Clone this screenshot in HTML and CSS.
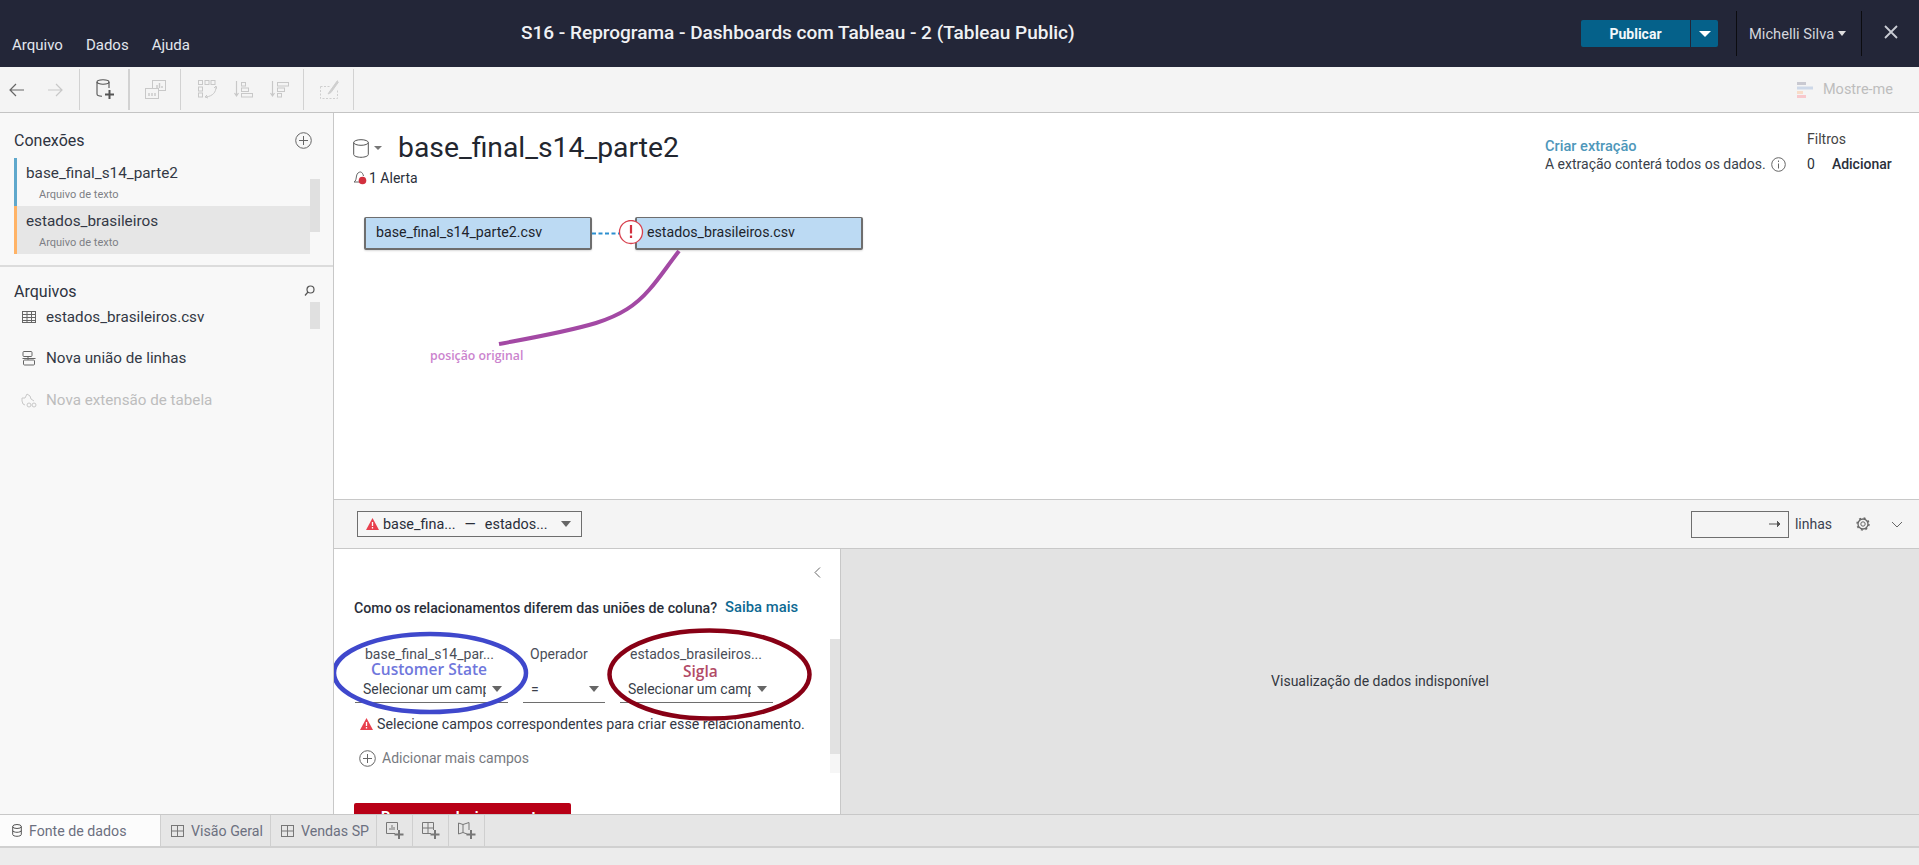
FILE: index.html
```html
<!DOCTYPE html>
<html lang="pt-BR">
<head>
<meta charset="utf-8">
<title>S16 - Reprograma - Dashboards com Tableau - 2 (Tableau Public)</title>
<link rel="stylesheet" href="styles.css">
</head>
<body>
<div class="app">
  <header class="topbar">
    <nav class="menu"><span>Arquivo</span><span>Dados</span><span>Ajuda</span></nav>
    <div class="doc-title">S16 - Reprograma - Dashboards com Tableau - 2 (Tableau Public)</div>
    <div class="publish"><span class="publish-main">Publicar</span><span class="publish-drop"><i class="caret caret-white"></i></span></div>
    <div class="user"><span>Michelli Silva</span><i class="caret caret-small"></i></div>
    <svg class="close" width="14" height="14" viewBox="0 0 14 14"><path d="M1 1l12 12M13 1L1 13" stroke="#c9ccd4" stroke-width="1.8" fill="none"/></svg>
  </header>

  <div class="toolbar">
    <div class="tool-group tg-nav">
      <svg width="16" height="14" viewBox="0 0 16 14"><path d="M15 7H1.5M7 1L1 7l6 6" stroke="#666" stroke-width="1.2" fill="none"/></svg>
      <svg width="16" height="14" viewBox="0 0 16 14"><path d="M1 7h13.5M9 1l6 6-6 6" stroke="#c8c8c8" stroke-width="1.2" fill="none"/></svg>
    </div>
    <div class="tool-group tg-data">
      <svg width="18" height="21" viewBox="0 0 18 21"><ellipse cx="7" cy="3" rx="6" ry="2.2" fill="none" stroke="#555" stroke-width="1.1"/><path d="M1 3v12c0 1.400 2 2.200 5 2.200M13 3v6" fill="none" stroke="#555" stroke-width="1.1"/><path d="M13.500 11v9M9 15.500h9" stroke="#555" stroke-width="2"/></svg>
    </div>
    <div class="tool-group tg-show">
      <svg width="21" height="20" viewBox="0 0 21 20" fill="none" stroke="#c8c8c8"><rect x="7.500" y=".5" width="13" height="10"/><rect x=".5" y="8.500" width="13" height="10" fill="#f4f4f4"/><path d="M12 8V5M14.500 8V3M17 8V6M4 16v-3M7 16v-3M10 16v-3" stroke-width="1.400"/></svg>
    </div>
    <div class="tool-group tg-sort">
      <svg width="19" height="19" viewBox="0 0 19 19" fill="none" stroke="#c8c8c8"><rect x=".5" y=".5" width="4" height="4"/><rect x="7" y=".5" width="4" height="4"/><rect x="13" y=".5" width="4" height="4"/><rect x=".5" y="7" width="4" height="4"/><rect x=".5" y="13" width="4" height="4"/><path d="M18 7c0 5-3 9-10 10M16 8l2-2 1 3M9 15l-2 2 3 1"/></svg>
      <svg width="19" height="17" viewBox="0 0 19 17" fill="none" stroke="#c8c8c8"><path d="M2.500 0v14M.5 12l2 3 2-3" stroke-width="1.200"/><rect x="7.500" y="1.500" width="4" height="3.500"/><rect x="7.500" y="7" width="7" height="3.500"/><rect x="7.500" y="12.500" width="11" height="3.500"/></svg>
      <svg width="19" height="17" viewBox="0 0 19 17" fill="none" stroke="#c8c8c8"><path d="M2.500 0v14M.5 12l2 3 2-3" stroke-width="1.200"/><rect x="7.500" y="1.500" width="11" height="3.500"/><rect x="7.500" y="7" width="7" height="3.500"/><rect x="7.500" y="12.500" width="4" height="3.500"/></svg>
    </div>
    <div class="tool-group tg-edit">
      <svg width="19" height="19" viewBox="0 0 19 19" fill="none" stroke="#cfcfcf"><path d="M.5 6.500h9M.5 6.500v12h17V9" stroke-dasharray="2 1.500"/><path d="M17.500 .5L10 11l-2 3 3-1.500L18.500 2" fill="#cfcfcf"/></svg>
    </div>
    <div class="show-me">
      <svg width="16" height="16" viewBox="0 0 16 16"><rect y="0" width="9" height="3" fill="#c9c9d1"/><rect y="4.500" width="16" height="3" fill="#cdd8e8"/><rect y="9" width="6" height="3" fill="#f8dcc8"/><rect y="13" width="9" height="3" fill="#f8c8cc"/></svg>
      <span>Mostre-me</span>
    </div>
  </div>

  <div class="workspace">
    <aside class="sidebar">
      <section class="connections">
        <div class="side-head">
          <h2>Conexões</h2>
          <svg width="17" height="17" viewBox="0 0 17 17" fill="none" stroke="#666"><circle cx="8.500" cy="8.500" r="7.800"/><path d="M8.500 4v9M4 8.500h9"/></svg>
        </div>
        <div class="conn-list">
          <div class="conn conn-blue"><div class="conn-name">base_final_s14_parte2</div><div class="conn-type">Arquivo de texto</div></div>
          <div class="conn conn-orange"><div class="conn-name">estados_brasileiros</div><div class="conn-type">Arquivo de texto</div></div>
          <div class="scroll-thumb conn-thumb"></div>
        </div>
      </section>
      <section class="files">
        <div class="side-head files-head">
          <h2>Arquivos</h2>
          <svg width="11" height="11" viewBox="0 0 11 11" fill="none" stroke="#555" stroke-width="1.200"><circle cx="6.500" cy="4.500" r="3.500"/><path d="M4 7L1 10.500"/></svg>
        </div>
        <div class="scroll-thumb file-thumb"></div>
        <div class="file-item">
          <svg width="14" height="12" viewBox="0 0 14 12" fill="none" stroke="#666"><rect x=".5" y=".5" width="13" height="11"/><path d="M.5 3.500h13M.5 6.500h13M.5 9.500h13M5 .5v11M9.500 .5v11"/></svg>
          <span>estados_brasileiros.csv</span>
        </div>
        <div class="file-item">
          <svg width="14" height="15" viewBox="0 0 14 15" fill="none" stroke="#666"><rect x="1" y=".5" width="9" height="5" rx="1"/><rect x="1.500" y="9" width="11" height="5" rx="1"/><path d="M.5 7.500h13M6 5.500V9"/></svg>
          <span>Nova união de linhas</span>
        </div>
        <div class="file-item file-disabled">
          <svg width="16" height="16" viewBox="0 0 16 16" fill="none" stroke="#c8c8c8"><path d="M1 9V6h3L6 2l3 2 1 3 3 2M1 9l1 3 2 1"/><circle cx="8" cy="13" r="2"/><circle cx="13" cy="13" r="2"/></svg>
          <span>Nova extensão de tabela</span>
        </div>
      </section>
    </aside>

    <main class="content">
      <section class="canvas">
        <div class="canvas-head">
          <div class="ds-block">
            <div class="ds-title">
              <svg width="16" height="19" viewBox="0 0 16 19" fill="none" stroke="#555"><ellipse cx="8" cy="3.500" rx="7.300" ry="2.800"/><path d="M.7 3.500v12c0 1.500 3.300 2.800 7.300 2.800s7.300-1.300 7.300-2.800v-12"/></svg>
              <i class="caret caret-tiny"></i>
              <h1>base_final_s14_parte2</h1>
            </div>
            <div class="alert">
              <svg width="15" height="14" viewBox="0 0 15 14"><path d="M1 11c2-1 2-3 2.500-6S6 1 7.500 1 10 3 10.500 5" fill="none" stroke="#666"/><path d="M1 11h6" stroke="#666"/><circle cx="9.500" cy="9.500" r="3.800" fill="#d2303e"/></svg>
              <span>1 Alerta</span>
            </div>
          </div>
          <div class="extract">
            <div class="extract-link">Criar extração</div>
            <div class="extract-note">A extração conterá todos os dados.
              <svg width="15" height="15" viewBox="0 0 15 15" fill="none" stroke="#666"><circle cx="7.500" cy="7.500" r="6.800"/><path d="M7.500 6.500V11.500M7.500 3.500v1.500"/></svg>
            </div>
          </div>
          <div class="filters">
            <div class="filters-label">Filtros</div>
            <div class="filters-row"><span>0</span><strong>Adicionar</strong></div>
          </div>
        </div>
        <div class="node node-a">base_final_s14_parte2.csv</div>
        <div class="node node-b">estados_brasileiros.csv</div>
        <svg class="link" width="52" height="26" viewBox="0 0 52 26">
          <path d="M0 13.500h29" stroke="#2c8fd0" stroke-width="2" stroke-dasharray="4 2.500"/>
          <circle cx="39" cy="12" r="11.500" fill="#fff" stroke="#d8404e" stroke-width="1.300"/>
          <path d="M39 5v8.500M39 15.500v2.500" stroke="#d2303e" stroke-width="2.200"/>
        </svg>
        <svg class="pointer" width="190" height="100" viewBox="0 0 190 100">
          <path d="M183 3C172 17 163 31 153 42C140 57 125 67 100 75C70 84 35 90 3 96" fill="none" stroke="#a349a4" stroke-width="4"/>
        </svg>
        <div class="pointer-label">posição original</div>
      </section>

      <div class="rel-bar">
        <div class="rel-select">
          <svg width="13" height="12" viewBox="0 0 13 12"><path d="M6.500 0L13 12H0z" fill="#e8404e"/><path d="M6.500 4v4M6.500 9v1.500" stroke="#fff" stroke-width="1.300"/></svg>
          <span>base_fina...</span><span class="dash">—</span><span>estados...</span>
          <i class="caret caret-grey"></i>
        </div>
        <div class="rows-box"><svg width="12" height="8" viewBox="0 0 12 8"><path d="M0 4h11M8 1l3 3-3 3" stroke="#555" fill="#555"/></svg></div>
        <span class="rows-label">linhas</span>
        <svg class="gear" width="14" height="14" viewBox="0 0 14 14" fill="none" stroke="#666"><circle cx="7" cy="7" r="2.200"/><circle cx="7" cy="7" r="5" stroke-width="1.300"/><circle cx="7" cy="7" r="6" stroke-width="1.400" stroke-dasharray="2 2.700"/></svg>
        <svg class="chev" width="12" height="7" viewBox="0 0 12 7" fill="none" stroke="#666"><path d="M1 1l5 5 5-5"/></svg>
      </div>

      <div class="lower">
        <section class="rel-panel">
          <svg class="collapse" width="7" height="11" viewBox="0 0 7 11" fill="none" stroke="#666"><path d="M6 .5L1 5.500l5 5"/></svg>
          <p class="rel-help"><span>Como os relacionamentos diferem das uniões de coluna?</span><a>Saiba mais</a></p>
          <div class="rel-fields">
            <div class="field field-wide">
              <div class="field-label">base_final_s14_par...</div>
              <div class="field-select"><span>Selecionar um campo</span><i class="caret caret-grey"></i></div>
            </div>
            <div class="field field-op">
              <div class="field-label">Operador</div>
              <div class="field-select"><span>=</span><i class="caret caret-grey"></i></div>
            </div>
            <div class="field field-wide">
              <div class="field-label">estados_brasileiros...</div>
              <div class="field-select"><span>Selecionar um campo</span><i class="caret caret-grey"></i></div>
            </div>
          </div>
          <div class="rel-warning">
            <svg width="13" height="12" viewBox="0 0 13 12"><path d="M6.500 0L13 12H0z" fill="#e8404e"/><path d="M6.500 4v4M6.500 9v1.500" stroke="#fff" stroke-width="1.300"/></svg>
            <span>Selecione campos correspondentes para criar esse relacionamento.</span>
          </div>
          <div class="rel-add">
            <svg width="17" height="17" viewBox="0 0 17 17" fill="none" stroke="#666"><circle cx="8.500" cy="8.500" r="7.800"/><path d="M8.500 4v9M4 8.500h9"/></svg>
            <span>Adicionar mais campos</span>
          </div>
          <div class="rel-remove">Remover relacionamento</div>
          <div class="panel-scroll"><div class="panel-thumb"></div></div>
          <svg class="ring ring-blue" width="200" height="87" viewBox="0 0 200 87"><ellipse cx="100" cy="42" rx="96" ry="39" fill="none" stroke="#3f48cc" stroke-width="4.500"/></svg>
          <svg class="ring ring-red" width="207" height="95" viewBox="0 0 207 95"><ellipse cx="103.500" cy="47.500" rx="100" ry="44" fill="none" stroke="#880015" stroke-width="4.500"/></svg>
          <div class="note note-blue">Customer State</div>
          <div class="note note-red">Sigla</div>
        </section>
        <section class="preview">Visualização de dados indisponível</section>
      </div>
    </main>
  </div>

  <footer class="tabs">
    <div class="tab tab-active">
      <svg width="10" height="13" viewBox="0 0 10 13" fill="none" stroke="#555"><ellipse cx="5" cy="2.500" rx="4.300" ry="2"/><path d="M.7 2.500v8c0 1 2 1.800 4.300 1.800s4.300-.8 4.300-1.800v-8M.7 6.500c0 1 2 1.800 4.300 1.800s4.300-.8 4.300-1.800"/></svg>
      <span>Fonte de dados</span>
    </div>
    <div class="tab tab-sheet">
      <svg width="13" height="12" viewBox="0 0 13 12" fill="none" stroke="#777"><rect x=".5" y=".5" width="12" height="11"/><path d="M.5 6h12M6.500 .5v11"/></svg>
      <span>Visão Geral</span>
    </div>
    <div class="tab tab-sheet tab-sp">
      <svg width="13" height="12" viewBox="0 0 13 12" fill="none" stroke="#777"><rect x=".5" y=".5" width="12" height="11"/><path d="M.5 6h12M6.500 .5v11"/></svg>
      <span>Vendas SP</span>
    </div>
    <div class="tab tab-new">
      <svg width="18" height="17" viewBox="0 0 18 17" fill="none" stroke="#777"><path d="M9 11.500H.5v-11h11V8"/><path d="M4 8V6M6 8V3M8 8V5"/><path d="M13 8v9M8.500 12.500h9" stroke-width="2"/></svg>
    </div>
    <div class="tab tab-new">
      <svg width="18" height="17" viewBox="0 0 18 17" fill="none" stroke="#777"><path d="M9 11.500H.5v-11h11V8M.5 6h11M6 .5v11"/><path d="M13 8v9M8.500 12.500h9" stroke-width="2"/></svg>
    </div>
    <div class="tab tab-new">
      <svg width="18" height="17" viewBox="0 0 18 17" fill="none" stroke="#777"><path d="M9 12l-4-1.500L.5 12V1L5 2.500 11 .5V8M5 2.500v8"/><path d="M13 8v9M8.500 12.500h9" stroke-width="2"/></svg>
    </div>
  </footer>
  <div class="statusbar"></div>
</div>
</body>
</html>
```

FILE: styles.css
```css
* { box-sizing: border-box; }
html, body { margin: 0; height: 100%; overflow: hidden; }
body { font-family: Roboto, "Liberation Sans", sans-serif; font-size: 14px; color: #2a2f3a; }
.app { display: flex; flex-direction: column; height: 865px; width: 1919px; background: #fff; }

.caret { display: inline-block; width: 0; height: 0; border-left: 5px solid transparent; border-right: 5px solid transparent; border-top: 6px solid #666; flex: none; }
.caret-white { border-top-color: #fff; border-left-width: 6px; border-right-width: 6px; }
.caret-small { border-top-color: #ddd; border-left-width: 4px; border-right-width: 4px; border-top-width: 5px; }
.caret-tiny { border-left-width: 4px; border-right-width: 4px; border-top-width: 4px; border-top-color: #777; }
.caret-grey { border-top-color: #666; }

/* top bar */
.topbar { height: 67px; flex: none; background: #232638; color: #e4e6ea; display: flex; align-items: center; position: relative; }
.menu { width: 521px; height: 100%; display: flex; gap: 23px; padding: 35px 0 0 12px; font-size: 15px; line-height: 20px; color: #e2e6ee; flex: none; }
.doc-title { width: 1060px; font-size: 19px; font-weight: 500; color: #f0f1f4; flex: none; padding-bottom: 2px; }
.publish { width: 137px; height: 27px; display: flex; border-radius: 2px; overflow: hidden; flex: none; }
.publish-main { width: 109px; background: #05618a; color: #f3f8fb; font-weight: 700; font-size: 14px; display: flex; align-items: center; justify-content: center; }
.publish-drop { flex: 1; margin-left: 1px; background: #05618a; display: flex; align-items: center; justify-content: center; }
.user { margin-left: 18px; width: 126px; height: 45px; border-left: 1px solid #0c0c10; border-right: 1px solid #0c0c10; display: flex; align-items: center; gap: 4px; padding-left: 12px; font-size: 14.700px; color: #d5d7de; flex: none; }
.close { margin-left: 22px; margin-bottom: 4px; flex: none; }

/* tool bar */
.toolbar { height: 46px; flex: none; background: #f4f4f4; border-bottom: 1px solid #c4c4c4; display: flex; align-items: stretch; padding: 2px 0 2px; }
.tool-group { display: flex; align-items: center; border-right: 1px solid #d2d2d2; }
.tg-nav { width: 80px; padding-left: 9px; gap: 22px; }
.tg-data { width: 50px; padding-left: 16px; border-right: 2px solid #d2d2d2; }
.tg-show { width: 51px; padding-left: 15px; }
.tg-sort { width: 123px; padding-left: 17px; gap: 17px; }
.tg-edit { width: 50px; padding-left: 16px; }
.show-me { margin-left: auto; display: flex; align-items: center; gap: 10px; padding-right: 26px; color: #bdbdbd; font-size: 14.500px; }

/* work area */
.workspace { flex: 1; display: flex; min-height: 0; }
.sidebar { width: 334px; flex: none; background: #f8f8f8; border-right: 1px solid #c8c8c8; display: flex; flex-direction: column; }
.connections { height: 154px; border-bottom: 2px solid #dcdcdc; padding-left: 14px; position: relative; flex: none; }
.side-head { display: flex; align-items: center; justify-content: space-between; height: 45px; padding: 9px 21px 0 0; }
.side-head h2 { margin: 0; font-size: 16px; font-weight: 400; color: #2e3340; }
.conn-list { width: 296px; position: relative; }
.conn { height: 48px; border-left: 3px solid; padding: 5px 0 0 9px; }
.conn-blue { border-color: #5fa8cc; }
.conn-orange { border-color: #ffb366; background: #e6e6e6; }
.conn-name { font-size: 15.300px; line-height: 20px; color: #333845; }
.conn-type { font-size: 11px; line-height: 14px; margin: 5px 0 0 13px; color: #7d7f85; }
.scroll-thumb { position: absolute; width: 10px; background: #e0e0e0; }
.conn-thumb { left: 296px; top: 21px; height: 53px; }
.files { position: relative; flex: 1; padding-left: 14px; }
.files-head { height: 46px; padding: 3px 18px 0 0; }
.files-head svg { margin-top: -2px; }
.file-thumb { left: 310px; top: 35px; height: 27px; }
.file-item { height: 41.500px; display: flex; align-items: center; gap: 10px; padding-left: 8px; font-size: 15.200px; color: #333845; position: relative; top: -17px; }
.file-disabled { color: #bdbdbd; padding-left: 7px; }
.file-disabled svg { margin-right: -1px; }

.content { flex: 1; min-width: 0; display: flex; flex-direction: column; }
.canvas { height: 386px; flex: none; position: relative; background: #fff; }
.canvas-head { display: flex; padding: 20px 0 0 19px; }
.ds-block { width: 1192px; flex: none; }
.ds-title { display: flex; align-items: center; height: 30px; }
.ds-title .caret { margin-left: 5px; }
.ds-title h1 { margin: 0 0 0 16px; font-size: 28.300px; font-weight: 400; line-height: 30px; color: #22262f; }
.alert { display: flex; align-items: center; gap: 1px; margin-top: 7px; font-size: 14px; line-height: 16px; }
.extract { width: 262px; flex: none; padding-top: 4px; font-size: 14px; line-height: 18px; }
.extract-link { color: #4e97ba; font-weight: 500; font-size: 14.600px; }
.extract-note { display: flex; align-items: center; gap: 5px; color: #3a3f4a; }
.filters { flex: 1; font-size: 14px; }
.filters-label { line-height: 18px; color: #444; margin-top: -3px; }
.filters-row { display: flex; gap: 17px; margin-top: 8px; }
.filters-row strong { font-weight: 500; color: #2a2f3a; }
.node { position: absolute; top: 104px; width: 228px; height: 33px; padding-left: 10px; line-height: 29px; font-size: 14.200px; background: #bcdaf3; border: 2px solid #6e6e6e; border-top-width: 1.500px; border-radius: 2px; box-shadow: 0 1px 2px rgba(0,0,0,.15); color: #20242c; }
.node-a { left: 30px; }
.node-b { left: 301px; }
.link { position: absolute; left: 258px; top: 107px; }
.pointer { position: absolute; left: 162px; top: 135px; }
.pointer-label { position: absolute; left: 96px; top: 235px; font-family: "Open Sans", sans-serif; font-weight: 600; font-size: 12.300px; line-height: 16px; color: #cb83ce; }

.rel-bar { height: 50px; flex: none; background: #f4f4f4; border-top: 1px solid #c8c8c8; border-bottom: 1px solid #c8c8c8; display: flex; align-items: center; padding: 0 16px 0 23px; font-size: 14px; }
.rel-select { width: 225px; height: 26px; border: 1px solid #6e6e6e; display: flex; align-items: center; padding: 0 10px 0 8px; gap: 4px; background: #f6f6f6; font-size: 14.400px; }
.rel-select .dash { margin: 0 5px; }
.rel-select .caret { margin-left: auto; }
.rows-box { margin-left: auto; width: 98px; height: 27px; border: 1px solid #6e6e6e; display: flex; align-items: center; justify-content: flex-end; padding-right: 7px; }
.rows-label { margin-left: 6px; color: #3b4150; }
.gear { margin-left: 24px; }
.chev { margin-left: 21px; }

.lower { flex: 1; display: flex; min-height: 0; }
.rel-panel { width: 507px; flex: none; position: relative; overflow: hidden; padding: 50px 0 0 21px; background: #fff; border-right: 1px solid #c8c8c8; }
.collapse { position: absolute; left: 480px; top: 18px; }
.rel-help { margin: 0 0 0 -1px; display: flex; gap: 8px; font-size: 14.200px; line-height: 18px; font-weight: 500; color: #2a2f3a; }
.rel-help a { color: #0e6a93; font-weight: 500; font-size: 14.800px; position: relative; top: -1px; }
.rel-fields { display: flex; gap: 15px; margin-top: 27px; }
.field { flex: none; }
.field-wide { width: 153px; }
.field-op { width: 82px; }
.field-label { padding-left: 10px; font-size: 14px; line-height: 20px; color: #4a4e58; height: 30px; }
.field-op .field-label { padding-left: 7px; }
.field-select { height: 24px; margin-top: 5px; border-bottom: 1px solid #6e6e6e; display: flex; align-items: center; justify-content: space-between; padding: 0 6px 4px 8px; font-size: 14px; color: #3a3f4a; }
.field-select span { width: 123px; overflow: hidden; white-space: nowrap; }
.field-op .field-select span { width: 20px; }
.rel-warning { display: flex; align-items: center; gap: 4px; margin: 12px 0 0 5px; line-height: 18px; font-size: 14.200px; color: #333845; }
.rel-add { display: flex; align-items: center; gap: 6px; margin: 16px 0 0 4px; height: 18px; color: #777a80; font-size: 14px; }
.rel-remove { margin: 36px 0 0 -1px; width: 217px; height: 40px; background: #b80016; border-radius: 2px; color: #fff; font-weight: 700; font-size: 14.500px; text-align: center; padding-top: 6px; }
.panel-scroll { position: absolute; left: 496px; top: 90px; width: 10px; height: 134px; background: #f6f6f6; }
.panel-thumb { height: 115px; background: #e2e2e2; }
.ring { position: absolute; }
.ring-blue { left: -4px; top: 82px; }
.ring-red { left: 272px; top: 78px; }
.note { position: absolute; font-family: "Open Sans", sans-serif; font-weight: 600; font-size: 15.500px; line-height: 18px; }
.note-blue { left: 37px; top: 111px; color: #6f77dc; }
.note-red { left: 349px; top: 113px; color: #b24a66; }
.preview { flex: 1; background: #e3e3e3; display: flex; align-items: center; justify-content: center; font-size: 14px; color: #33373f; padding-bottom: 2px; }

/* tabs */
.tabs { height: 34px; flex: none; background: #e6e6e6; border-top: 1px solid #c8c8c8; border-bottom: 2px solid #d0d0d0; display: flex; }
.tab { display: flex; align-items: center; border-right: 1px solid #cfcfcf; gap: 8px; font-size: 14.200px; color: #6c7080; }
.tab-active { width: 161px; background: #fcfcfc; padding-left: 12px; gap: 7px; }
.tab-sheet { width: 110px; padding-left: 10px; gap: 7px; }
.tab-sp { width: 106px; }
.tab-new { width: 36px; justify-content: center; }
.statusbar { height: 17px; flex: none; background: #ececec; }
```
